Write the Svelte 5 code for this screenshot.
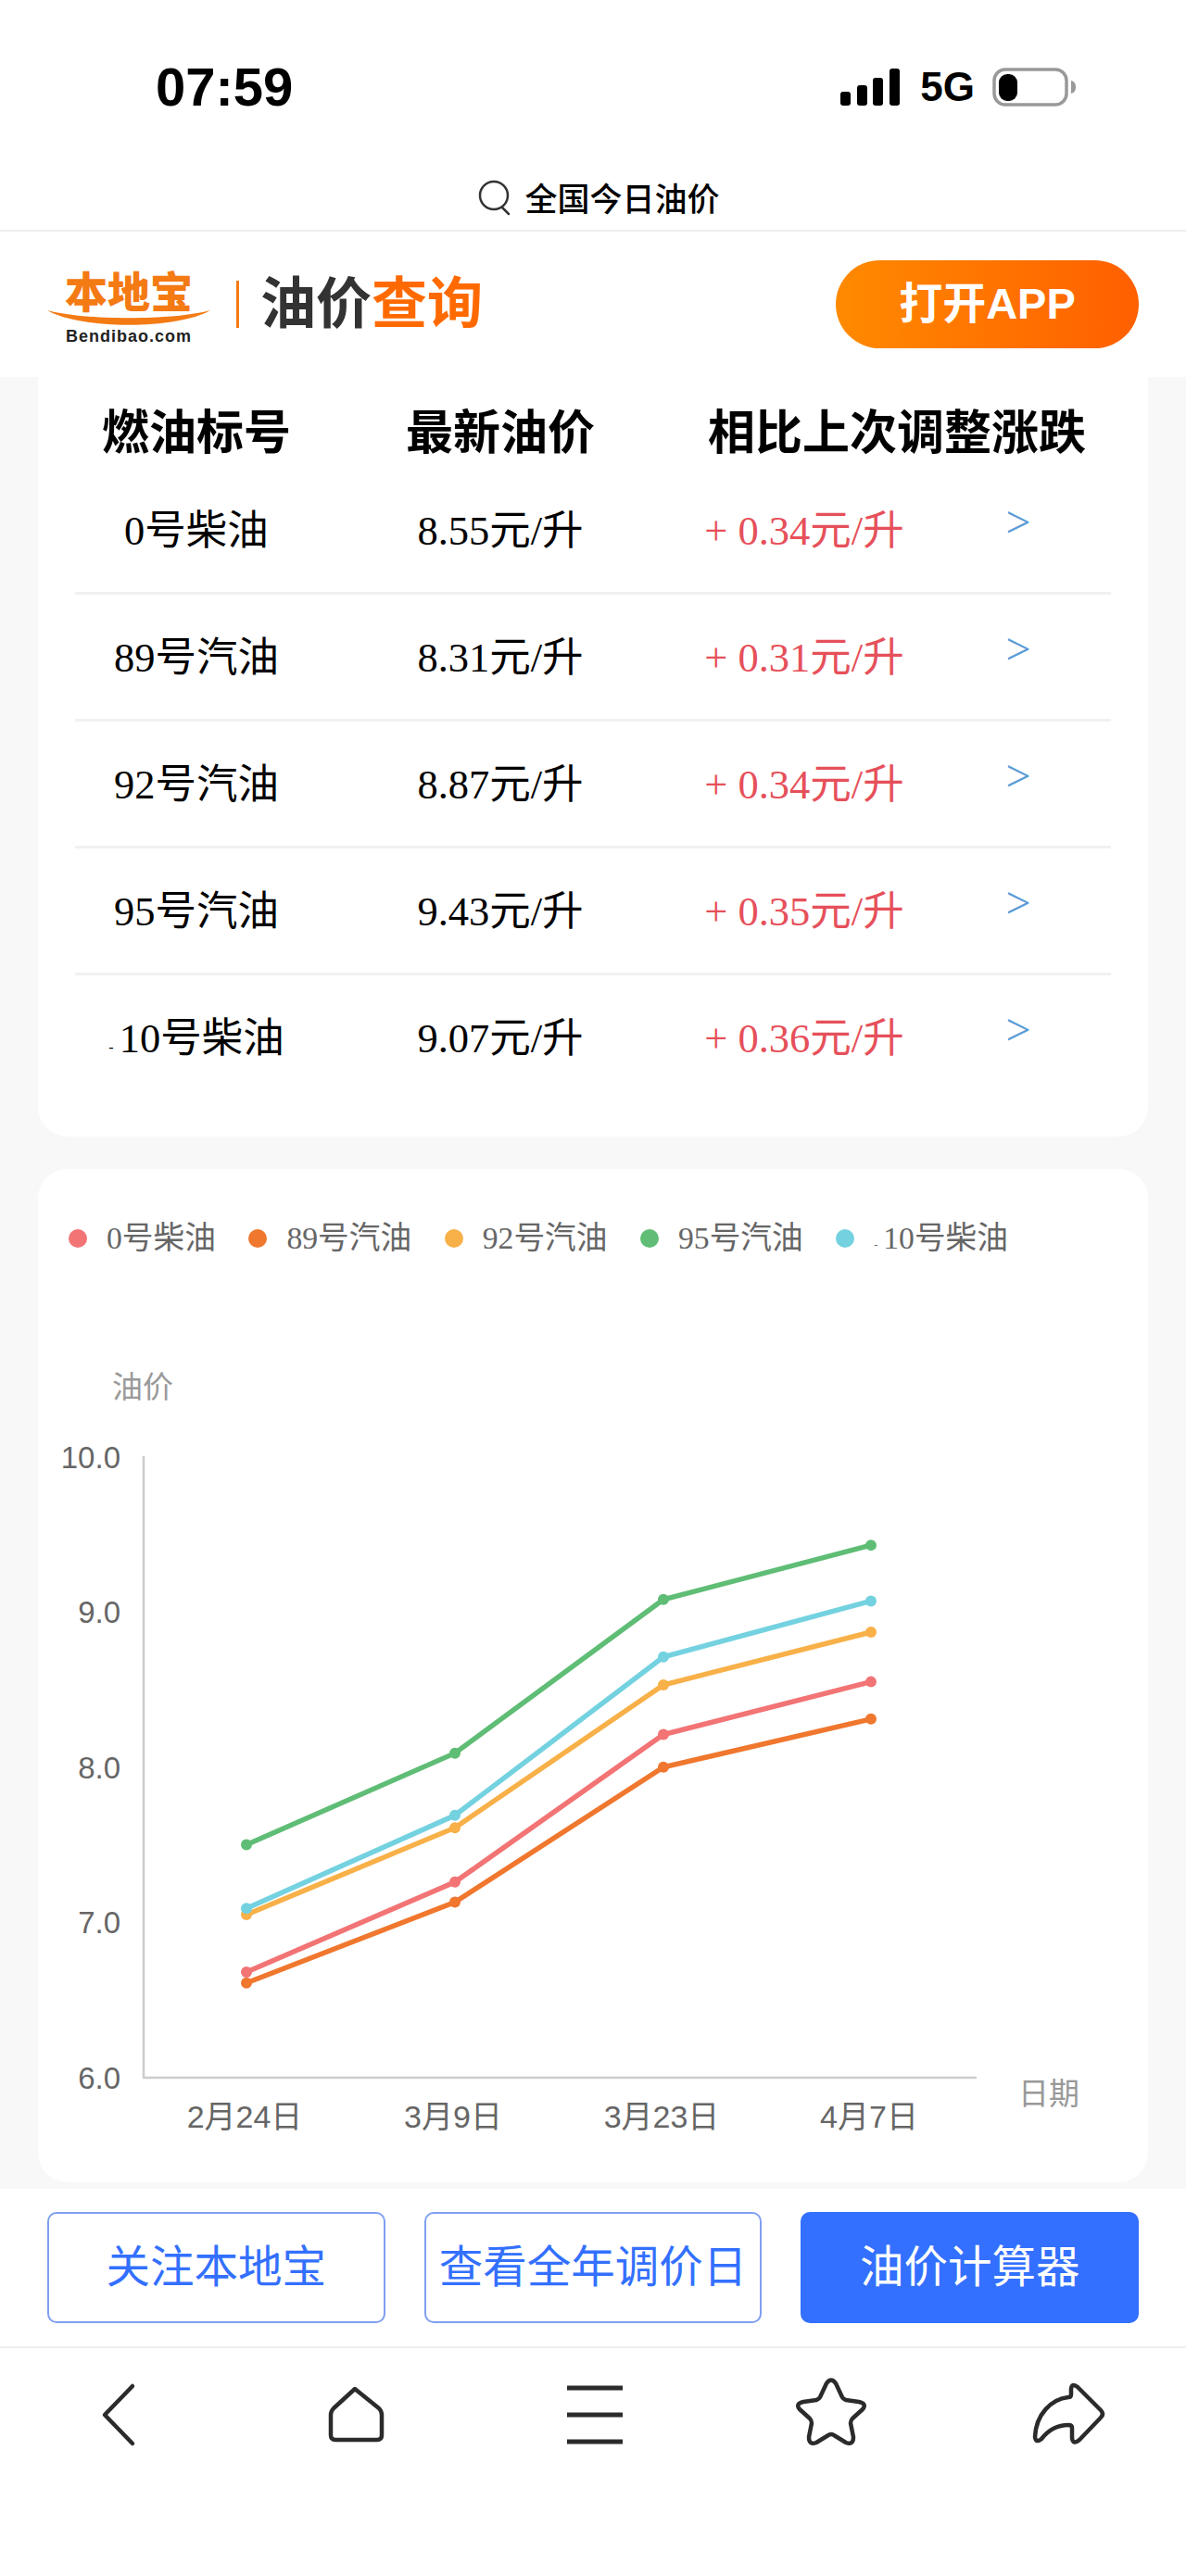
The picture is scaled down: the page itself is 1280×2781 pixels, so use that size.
<script>
  const rows = [
    { name: '0号柴油', price: '8.55', diff: '0.34' },
    { name: '89号汽油', price: '8.31', diff: '0.31' },
    { name: '92号汽油', price: '8.87', diff: '0.34' },
    { name: '95号汽油', price: '9.43', diff: '0.35' },
    { name: '10号柴油', price: '9.07', diff: '0.36', minus: true }
  ]

  const series = [
    { name: '0号柴油', color: '#f27475', data: [6.68, 7.26, 8.21, 8.55] },
    { name: '89号汽油', color: '#f0772e', data: [6.61, 7.13, 8.0, 8.31] },
    { name: '92号汽油', color: '#f8b048', data: [7.05, 7.61, 8.53, 8.87] },
    { name: '95号汽油', color: '#5fbd75', data: [7.5, 8.09, 9.08, 9.43] },
    { name: '10号柴油', color: '#74d2e0', data: [7.09, 7.69, 8.71, 9.07], minus: true }
  ]

  const xs = [266, 491, 716, 940]
  const dates = ['2月24日', '3月9日', '3月23日', '4月7日']
  const ticks = [10, 9, 8, 7, 6]

  // chart is drawn in page coordinates, see the viewBox below
  const yOf = (v) => 2243 - (v - 6) * 167.6
  const points = (data) => data.map((v, i) => xs[i] + ',' + yOf(v)).join(' ')
</script>

<div class="page">
  <div class="status">
    <div class="time">07:59</div>
    <div class="status-right">
      <svg class="signal" width="64" height="40" viewBox="0 0 64 40">
        <rect x="0" y="25" width="11" height="15" rx="3" />
        <rect x="18" y="18" width="11" height="22" rx="3" />
        <rect x="35" y="10" width="11" height="30" rx="3" />
        <rect x="53" y="0" width="11" height="40" rx="3" />
      </svg>
      <span class="net">5G</span>
      <svg class="battery" width="91" height="42" viewBox="0 0 91 42">
        <rect x="2" y="2" width="78" height="38" rx="12" fill="#fff" stroke="#999" stroke-width="3.5" />
        <rect x="7" y="7" width="20" height="29" rx="9" fill="#000" />
        <path d="M85 14 C89 15 90 18 90 21 C90 24 89 27 85 28 Z" fill="#999" />
      </svg>
    </div>
  </div>

  <div class="search">
    <svg width="36" height="40" viewBox="0 0 36 40">
      <circle cx="17" cy="17" r="15" fill="none" stroke="#333" stroke-width="2.5" />
      <path d="M26 30 L33 37" fill="none" stroke="#333" stroke-width="2.5" stroke-linecap="round" />
    </svg>
    <span>全国今日油价</span>
  </div>

  <header>
    <div class="logo">
      <div class="logo-cn">本地宝</div>
      <svg class="swoosh" width="176" height="18" viewBox="0 0 176 18">
        <path d="M0 1 C40 12 136 12 176 1 C140 22 36 22 0 1 Z" fill="#f47a14" />
      </svg>
      <div class="logo-en">Bendibao.com</div>
    </div>
    <div class="bar"></div>
    <div class="title">油价<em>查询</em></div>
    <div class="open">打开APP</div>
  </header>

  <main>
    <section class="card table">
      <div class="thead">
        <div>燃油标号</div>
        <div>最新油价</div>
        <div class="wide">相比上次调整涨跌</div>
      </div>
      {#each rows as r, i}
        <div class="row" class:last={i === rows.length - 1}>
          <div>{#if r.minus}<span class="minus">-</span>{/if}{r.name}</div>
          <div>{r.price}元/升</div>
          <div class="up">+ {r.diff}元/升</div>
          <div class="more">&gt;</div>
        </div>
      {/each}
    </section>

    <section class="card chart">
      <div class="legend">
        {#each series as s}
          <div class="item">
            <i style="background:{s.color}"></i>
            <span>{#if s.minus}<span class="minus small">-</span>{/if}{s.name}</span>
          </div>
        {/each}
      </div>
      <svg width="1198" height="999" viewBox="41 1357 1198 999">
        <text x="154" y="1509" class="axis-name" text-anchor="middle">油价</text>
        {#each ticks as t}
          <text x="130" y={yOf(t) + 12} class="tick" text-anchor="end">{t.toFixed(1)}</text>
        {/each}
        <path d="M155 1572 V2243 H1054" fill="none" stroke="#ccc" stroke-width="2.5" />
        {#each dates as d, i}
          <text x={xs[i] - 2} y="2297" class="tick date" text-anchor="middle">{d}</text>
        {/each}
        <text x="1132" y="2272" class="axis-name" text-anchor="middle">日期</text>
        {#each series as s}
          <polyline points={points(s.data)} fill="none" stroke={s.color} stroke-width="5.5" />
          {#each s.data as v, i}
            <circle cx={xs[i]} cy={yOf(v)} r="6" fill={s.color} />
          {/each}
        {/each}
      </svg>
    </section>
  </main>

  <div class="actions">
    <div class="btn">关注本地宝</div>
    <div class="btn">查看全年调价日</div>
    <div class="btn solid">油价计算器</div>
  </div>

  <nav>
    <svg width="1280" height="100" viewBox="0 2555 1280 100" fill="none" stroke="#2b2b2b" stroke-width="4.5" stroke-linecap="round" stroke-linejoin="round">
      <path d="M143 2576 L113 2607 L143 2638" />
      <path d="M383 2579 L409 2600 Q412 2603 412 2607 V2629 Q412 2634 407 2634 H362 Q357 2634 357 2629 V2607 Q357 2603 360 2600 Z" />
      <path d="M612 2578 H672 M612 2607 H672 M612 2636 H672" stroke-width="5" stroke-linecap="butt" />
      <path d="M892 2573 Q897 2566 902 2573 L909 2588 Q910 2590 913 2591 L927 2593 Q936 2595 931 2601 L920 2611 Q918 2613 918 2616 L921 2631 Q921 2640 913 2637 L900 2629 Q897 2627 894 2629 L881 2637 Q873 2640 873 2631 L876 2616 Q876 2613 874 2611 L863 2601 Q858 2595 867 2593 L881 2591 Q884 2590 885 2588 Z" />
      <path d="M1156 2579 Q1157 2572 1163 2577 L1188 2602 Q1192 2606 1188 2610 L1165 2634 Q1158 2640 1157 2632 V2621 Q1157 2618 1153 2618 C1140 2618 1131 2624 1124 2633 Q1118 2638 1117 2631 C1118 2606 1135 2590 1153 2588 Q1156 2588 1156 2585 Z" />
    </svg>
  </nav>
</div>

<style>
  :global(body) {
    margin: 0;
    background: #fff;
  }
  .page {
    width: 1280px;
    height: 2781px;
    overflow: hidden;
    font-family: "Liberation Sans", "Noto Sans CJK SC", sans-serif;
    color: #000;
  }
  .status {
    height: 180px;
    box-sizing: border-box;
    padding: 62px 118px 0 168px;
    display: flex;
    justify-content: space-between;
    align-items: flex-start;
  }
  .time {
    font-size: 58px;
    font-weight: 700;
    line-height: 64px;
  }
  .status-right {
    margin-top: 11px;
    display: flex;
    align-items: center;
    gap: 22px;
  }
  .net {
    font-size: 44px;
    font-weight: 700;
    line-height: 42px;
    margin-right: -3px;
  }
  .search {
    height: 68px;
    border-bottom: 2px solid #eee;
    display: flex;
    justify-content: center;
    gap: 14px;
    padding-left: 13px;
    font-size: 35px;
    font-weight: 500;
    line-height: 72px;
  }
  .search svg {
    margin-top: 14px;
  }
  header {
    height: 157px;
    box-sizing: border-box;
    padding: 0 51px;
    display: flex;
    align-items: center;
    background: #fff;
  }
  .logo {
    width: 176px;
    display: flex;
    flex-direction: column;
    align-items: center;
    margin-top: 6px;
  }
  .logo-cn {
    font-size: 46px;
    font-weight: 900;
    line-height: 48px;
    color: #f47a14;
  }
  .swoosh {
    margin-top: -6px;
    display: block;
  }
  .logo-en {
    font-size: 18px;
    font-weight: 700;
    line-height: 18px;
    letter-spacing: 1px;
    margin-top: 2px;
    color: #222;
  }
  .bar {
    width: 3px;
    height: 51px;
    margin-left: 28px;
    background: #f47a14;
  }
  .title {
    margin-left: 23px;
    font-size: 60px;
    font-weight: 700;
    line-height: 70px;
    color: #333;
  }
  .title em {
    font-style: normal;
    color: #ff6a00;
  }
  .open {
    margin-left: auto;
    width: 327px;
    height: 95px;
    border-radius: 48px;
    background: linear-gradient(90deg, #ff8a00, #ff5f00);
    color: #fff;
    font-size: 47px;
    font-weight: 700;
    line-height: 93px;
    text-align: center;
  }
  main {
    height: 1956px;
    box-sizing: border-box;
    background: #f8f8f8;
    padding: 0 41px;
  }
  .card {
    background: #fff;
    width: 1198px;
  }
  .table {
    height: 820px;
    box-sizing: border-box;
    padding: 28px 40px 0;
    border-radius: 0 0 32px 32px;
  }
  .thead,
  .row {
    display: grid;
    grid-template-columns: 262px 394px 262px 200px;
    text-align: center;
    color: #000;
  }
  .thead {
    height: 70px;
    font-size: 51px;
    font-weight: 700;
    line-height: 66px;
  }
  .wide {
    grid-column: 3 / 5;
  }
  .row {
    height: 137px;
    box-sizing: border-box;
    border-bottom: 3px solid #f1f1f1;
    font-family: "Liberation Serif", "Noto Sans CJK SC", serif;
    font-size: 44.5px;
    line-height: 136px;
  }
  .row.last {
    border-bottom: 0;
  }
  .up {
    color: #e6505a;
  }
  .more {
    color: #5b9bd5;
    font-size: 48px;
    line-height: 118px;
  }
  .minus {
    font-size: 16px;
    line-height: 0;
    margin-right: 6px;
  }
  .minus.small {
    font-size: 12px;
    margin-right: 6px;
  }
  .chart {
    margin-top: 35px;
    height: 1094px;
    border-radius: 32px;
    box-sizing: border-box;
    padding-top: 55px;
  }
  .chart svg {
    display: block;
  }
  .legend {
    height: 40px;
    padding-left: 33px;
    display: flex;
    gap: 35.5px;
    font-family: "Liberation Serif", "Noto Sans CJK SC", serif;
    font-size: 33.7px;
    line-height: 42px;
    color: #666;
  }
  .item {
    display: flex;
    align-items: center;
    gap: 21px;
  }
  .item i {
    width: 20px;
    height: 20px;
    border-radius: 50%;
  }
  .tick {
    font-size: 33px;
    fill: #666;
  }
  .date {
    font-size: 34px;
  }
  .axis-name {
    font-size: 33px;
    fill: #999;
  }
  .actions {
    height: 172px;
    box-sizing: border-box;
    padding: 25px 51px 0;
    display: flex;
    gap: 42px;
    border-bottom: 2px solid #eee;
  }
  .btn {
    width: 365px;
    height: 120px;
    box-sizing: border-box;
    border: 2px solid #7f9ff0;
    border-radius: 10px;
    color: #3370ff;
    font-size: 47.5px;
    line-height: 116px;
    text-align: center;
    white-space: nowrap;
  }
  .btn.solid {
    background: #3370ff;
    border-color: #3370ff;
    color: #fff;
  }
  nav {
    padding-top: 20px;
  }
  nav svg {
    display: block;
  }
</style>
